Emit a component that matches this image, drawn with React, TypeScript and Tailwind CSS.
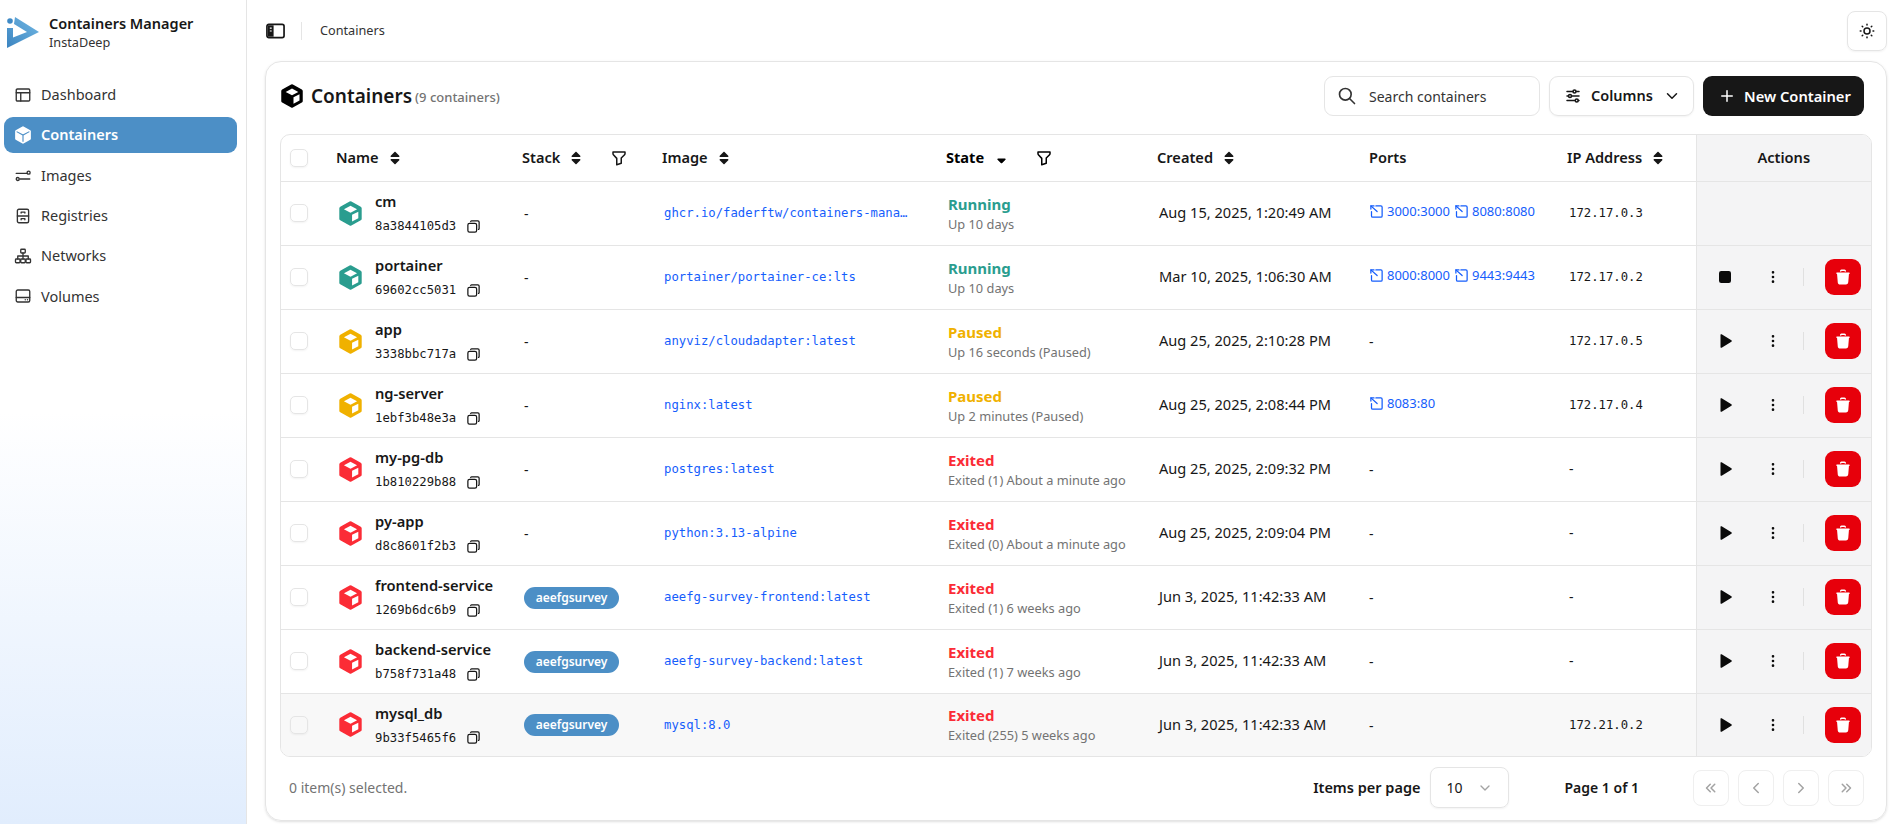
import {
  TbAdjustmentsHorizontal,
  TbChevronDown,
  TbChevronLeft,
  TbChevronRight,
  TbChevronsLeft,
  TbChevronsRight,
  TbCopy,
  TbDotsVertical,
  TbFilter,
  TbPlayerPlayFilled,
  TbPlayerStopFilled,
  TbPlus,
  TbSearch,
  TbSun,
  TbTrashFilled,
} from "react-icons/tb";
import { FaSort, FaSortDown } from "react-icons/fa";

type State = "Running" | "Paused" | "Exited";

interface Container {
  name: string;
  id: string;
  stack?: string;
  image: string;
  state: State;
  status: string;
  created: string;
  ports: string[];
  ip: string;
}

const containers: Container[] = [
  { name: "cm", id: "8a3844105d3", image: "ghcr.io/faderftw/containers-mana…", state: "Running", status: "Up 10 days", created: "Aug 15, 2025, 1:20:49 AM", ports: ["3000:3000", "8080:8080"], ip: "172.17.0.3" },
  { name: "portainer", id: "69602cc5031", image: "portainer/portainer-ce:lts", state: "Running", status: "Up 10 days", created: "Mar 10, 2025, 1:06:30 AM", ports: ["8000:8000", "9443:9443"], ip: "172.17.0.2" },
  { name: "app", id: "3338bbc717a", image: "anyviz/cloudadapter:latest", state: "Paused", status: "Up 16 seconds (Paused)", created: "Aug 25, 2025, 2:10:28 PM", ports: [], ip: "172.17.0.5" },
  { name: "ng-server", id: "1ebf3b48e3a", image: "nginx:latest", state: "Paused", status: "Up 2 minutes (Paused)", created: "Aug 25, 2025, 2:08:44 PM", ports: ["8083:80"], ip: "172.17.0.4" },
  { name: "my-pg-db", id: "1b810229b88", image: "postgres:latest", state: "Exited", status: "Exited (1) About a minute ago", created: "Aug 25, 2025, 2:09:32 PM", ports: [], ip: "-" },
  { name: "py-app", id: "d8c8601f2b3", image: "python:3.13-alpine", state: "Exited", status: "Exited (0) About a minute ago", created: "Aug 25, 2025, 2:09:04 PM", ports: [], ip: "-" },
  { name: "frontend-service", id: "1269b6dc6b9", stack: "aeefgsurvey", image: "aeefg-survey-frontend:latest", state: "Exited", status: "Exited (1) 6 weeks ago", created: "Jun 3, 2025, 11:42:33 AM", ports: [], ip: "-" },
  { name: "backend-service", id: "b758f731a48", stack: "aeefgsurvey", image: "aeefg-survey-backend:latest", state: "Exited", status: "Exited (1) 7 weeks ago", created: "Jun 3, 2025, 11:42:33 AM", ports: [], ip: "-" },
  { name: "mysql_db", id: "9b33f5465f6", stack: "aeefgsurvey", image: "mysql:8.0", state: "Exited", status: "Exited (255) 5 weeks ago", created: "Jun 3, 2025, 11:42:33 AM", ports: [], ip: "172.21.0.2" },
];

const stateText: Record<State, string> = {
  Running: "text-[#2a9d8f]",
  Paused: "text-[#f0b100]",
  Exited: "text-[#fb2c36]",
};

// --- Icons drawn by hand ---
const Logo = () => (
  <svg width="34" height="33" viewBox="0 0 34 33" className="shrink-0">
    <defs>
      <linearGradient id="logo" x1="0" y1="1" x2="1" y2="0">
        <stop offset="0" stopColor="#3b84c0" />
        <stop offset="1" stopColor="#72b8e4" />
      </linearGradient>
    </defs>
    <path d="M9 1 33 16 1 32V12h6v9.500L21 16 8 8Z" fill="url(#logo)" />
    <circle cx="4" cy="5" r="2.800" fill="#3f8ac6" />
  </svg>
);

const Cube = ({ className }: { className: string }) => (
  <svg viewBox="0 0 24 24" className={className}>
    <path d="M12 2 21 7v10L12 22 3 17V7Z" fill="currentColor" stroke="currentColor" strokeWidth="3.500" strokeLinejoin="round" />
    <path d="M12 4.600 18.300 8 12 11.200 5.700 8Z" fill="#fff" />
    <path d="M13.500 13.200 19.500 10.200v6.300l-6 3.200Z" fill="#fff" />
  </svg>
);

const ActiveCube = () => (
  <svg viewBox="0 0 24 24" className="h-[18px] w-[18px] shrink-0">
    <path d="M12 2 21 7v10L12 22 3 17V7Z" fill="#fff" stroke="#fff" strokeWidth="3" strokeLinejoin="round" />
    <path d="M3.500 7.500 12 12l8.500-4.500M12 12v9" fill="none" stroke="#4c8fc6" strokeWidth="1.500" />
  </svg>
);

const PortIcon = () => (
  <svg viewBox="0 0 24 24" fill="none" stroke="currentColor" strokeWidth="2" strokeLinecap="round" strokeLinejoin="round" className="h-[15px] w-[15px] shrink-0">
    <path d="M11 3h8a2 2 0 0 1 2 2v14a2 2 0 0 1-2 2H6a2 2 0 0 1-2-2v-7" />
    <path d="M13 12 3 3" />
    <path d="M3 8V3h5" />
  </svg>
);

const navIcon = "h-[18px] w-[18px] shrink-0";
const stroke = { fill: "none", stroke: "currentColor", strokeWidth: 1.8, strokeLinecap: "round" as const, strokeLinejoin: "round" as const };

const DashboardIcon = () => (
  <svg viewBox="0 0 24 24" className={navIcon} {...stroke}>
    <rect x="3" y="4" width="18" height="16" rx="1.500" />
    <path d="M3 9h18M9 9v11" />
  </svg>
);
const ImagesIcon = () => (
  <svg viewBox="0 0 24 24" className={navIcon} {...stroke}>
    <path d="M3 8.500h14.500M21 16H8" />
    <circle cx="19.500" cy="7.500" r="2" />
    <circle cx="5" cy="16" r="2" />
  </svg>
);
const RegistriesIcon = () => (
  <svg viewBox="0 0 24 24" className={navIcon} {...stroke}>
    <rect x="4.500" y="3" width="15" height="18" rx="2" />
    <path d="M4.500 12h15M9.500 8V6.800h5V8M9.500 17v-1.500h5V17" />
  </svg>
);
const NetworksIcon = () => (
  <svg viewBox="0 0 24 24" className={navIcon} {...stroke}>
    <rect x="9" y="3" width="6" height="5" rx="1" />
    <rect x="2" y="16" width="6" height="5" rx="1" />
    <rect x="9" y="16" width="6" height="5" rx="1" />
    <rect x="16" y="16" width="6" height="5" rx="1" />
    <path d="M12 8v8M5 16v-4h14v4" />
  </svg>
);
const VolumesIcon = () => (
  <svg viewBox="0 0 24 24" className={navIcon} {...stroke}>
    <rect x="3" y="4" width="18" height="16" rx="2" />
    <path d="M3 14h18M15 17h.01M18 17h.01" />
  </svg>
);
const SidebarIcon = () => (
  <svg viewBox="0 0 20 16" className="h-[16px] w-[19px]">
    <rect x="1" y="1" width="18" height="14" rx="2" fill="none" stroke="currentColor" strokeWidth="1.800" />
    <path d="M2 2h6v12H2Z" fill="currentColor" />
    <path d="M4 5h2M4 8h2" stroke="#fff" strokeWidth="1.200" />
  </svg>
);

const checkbox = "block h-[18px] w-[18px] rounded-[5px] border border-[#e5e5e5] shadow-xs";

const nav = [
  { label: "Dashboard", icon: <DashboardIcon /> },
  { label: "Containers", icon: <ActiveCube />, active: true },
  { label: "Images", icon: <ImagesIcon /> },
  { label: "Registries", icon: <RegistriesIcon /> },
  { label: "Networks", icon: <NetworksIcon /> },
  { label: "Volumes", icon: <VolumesIcon /> },
];

const Sidebar = () => (
  <aside className="flex w-[247px] shrink-0 flex-col border-r border-[#e5e5e5] bg-gradient-to-b from-white from-50% to-[#e1edfd] pl-1 pr-[9px]">
    <div className="flex h-[60px] items-center gap-[9px] pl-[2px] pt-[4px]">
      <Logo />
      <div className="flex flex-col">
        <span className="text-[14.500px] leading-[20px] font-semibold text-[#171717]">Containers Manager</span>
        <span className="text-[12.700px] leading-[18px] text-[#333]">InstaDeep</span>
      </div>
    </div>
    <nav className="mt-[17px] flex flex-col gap-[4.300px]">
      {nav.map((item) => (
        <div
          key={item.label}
          className={
            item.active
              ? "flex h-[36px] items-center gap-[9px] rounded-[9px] bg-[#4c8fc6] pl-[10px] text-[14.500px] font-semibold text-white"
              : "flex h-[36px] items-center gap-[9px] pl-[10px] text-[14.500px] text-[#333]"
          }
        >
          {item.icon}
          {item.label}
        </div>
      ))}
    </nav>
  </aside>
);

const Th = ({ label, sort, filter, bold }: { label: string; sort?: boolean; filter?: boolean; bold?: boolean }) => (
  <th className="border-b border-[#e5e5e5] px-2.5 text-left">
    <div className={bold ? "flex items-center text-[14.600px] font-bold text-black" : "flex items-center text-[14.600px] font-semibold text-[#171717]"}>
      {label}
      {sort && (bold ? <FaSortDown className="ml-[10px] h-[15px] w-[15px]" /> : <FaSort className="ml-[8px] h-[16px] w-[16px]" />)}
      {filter && <TbFilter className="ml-[26px] h-[18px] w-[18px]" />}
    </div>
  </th>
);

const Row = ({ row, last }: { row: Container; last: boolean }) => (
  <tr className={last ? "h-[63px] bg-[#f8f8f8]" : "h-[64px] border-b border-[#e5e5e5]"}>
    <td className="pl-[9px]">
      <span className={checkbox} />
    </td>
    <td className="pl-3">
      <div className="flex items-center gap-[12px]">
        <Cube className={`h-[25px] w-[25px] shrink-0 ${stateText[row.state]}`} />
        <div className="flex flex-col">
          <span className="text-[14.700px] leading-[20px] font-semibold text-[#171717]">{row.name}</span>
          <span className="mt-[6px] flex items-center gap-[10px] font-['DejaVu_Sans_Mono',monospace] text-[12.250px] leading-[18px] text-[#171717]">
            {row.id}
            <TbCopy className="h-[15px] w-[15px] -scale-x-100" />
          </span>
        </div>
      </div>
    </td>
    <td className="pl-3 text-[14px] text-[#171717]">
      {row.stack ? (
        <span className="inline-flex h-[22px] w-[95px] items-center justify-center rounded-full bg-[#4c8fc6] text-[12px] font-semibold text-white">{row.stack}</span>
      ) : (
        "-"
      )}
    </td>
    <td className="pl-3">
      <span className="block whitespace-nowrap font-['DejaVu_Sans_Mono',monospace] text-[12.250px] text-[#155dfc]">{row.image}</span>
    </td>
    <td className="pl-3">
      <div className="flex flex-col">
        <span className={`-mt-[1px] text-[15px] leading-[20px] font-bold ${stateText[row.state]}`}>{row.state}</span>
        <span className="mt-[2px] text-[12.800px] leading-[16px] text-[#737373]">{row.status}</span>
      </div>
    </td>
    <td className="pl-3 text-[14.600px] text-[#171717]">{row.created}</td>
    <td className="pl-2.5">
      {row.ports.length ? (
        <div className="-mt-[3px] flex items-center gap-[4px] text-[13px] text-[#155dfc]">
          {row.ports.map((port) => (
            <span key={port} className="flex items-center gap-[3px]">
              <PortIcon />
              {port}
            </span>
          ))}
        </div>
      ) : (
        <span className="text-[14px] text-[#171717]">-</span>
      )}
    </td>
    <td className="pl-3 font-['DejaVu_Sans_Mono',monospace] text-[12.250px] text-[#171717]">
      {row.ip === "-" ? <span className="font-['Noto_Sans',sans-serif] text-[14px]">-</span> : row.ip}
    </td>
    <td className="border-l border-[#e5e5e5] bg-[#f4f4f5] pl-[10px]">
      {row.name !== "cm" && (
        <div className="flex items-center">
          <span className="flex h-9 w-9 items-center justify-center text-[#0a0a0a]">
            {row.state === "Running" ? <TbPlayerStopFilled className="h-[18px] w-[18px]" /> : <TbPlayerPlayFilled className="h-[18px] w-[18px]" />}
          </span>
          <span className="ml-3 flex h-9 w-9 items-center justify-center text-[#0a0a0a]">
            <TbDotsVertical className="h-[16px] w-[16px]" />
          </span>
          <span className="ml-3 h-[18px] w-px bg-[#e0e0e0]" />
          <span className="ml-[21px] flex h-9 w-9 items-center justify-center rounded-[9px] bg-[#e7000b] text-white">
            <TbTrashFilled className="h-[18px] w-[18px]" />
          </span>
        </div>
      )}
    </td>
  </tr>
);

const pagerButton = "flex h-[36px] w-[36px] items-center justify-center rounded-[8px] border border-[#efefef] text-[#a3a3a3]";

export default function App() {
  return (
    <div className="flex h-screen w-full overflow-hidden bg-white font-['Noto_Sans',sans-serif] text-[#171717]">
      <Sidebar />
      <main className="flex min-w-0 flex-1 flex-col">
        <header className="flex h-[61px] shrink-0 items-center pl-[19px] pr-[17px]">
          <SidebarIcon />
          <span className="ml-[16px] h-[18px] w-px bg-[#e5e5e5]" />
          <span className="ml-[18px] text-[12.700px] text-[#333]">Containers</span>
          <button className="ml-auto flex h-[40px] w-[40px] items-center justify-center rounded-[8px] border border-[#e5e5e5] shadow-xs">
            <TbSun className="h-[18px] w-[18px]" />
          </button>
        </header>

        <section className="ml-[18px] mr-[17px] flex h-[760px] shrink-0 flex-col rounded-[16px] border border-[#e5e5e5] px-[14px] shadow-sm">
          <div className="flex h-[72px] shrink-0 items-center pb-[4px]">
            <Cube className="h-[24px] w-[24px] text-black" />
            <h1 className="ml-[7px] text-[19px] font-semibold text-[#171717]">Containers</h1>
            <span className="ml-[3px] mt-[3px] text-[13px] font-medium text-[#737373]">(9 containers)</span>
            <div className="ml-auto flex h-[40px] w-[216px] items-center gap-[12px] rounded-[9px] border border-[#e5e5e5] pl-[12px] text-[14px] text-[#333]">
              <TbSearch className="h-[20px] w-[20px]" />
              Search containers
            </div>
            <div className="ml-[9px] flex h-[40px] w-[145px] items-center rounded-[9px] border border-[#e5e5e5] pl-[14px] text-[14.500px] font-semibold shadow-xs">
              <TbAdjustmentsHorizontal className="h-[18px] w-[18px]" />
              <span className="ml-[9px]">Columns</span>
              <TbChevronDown className="ml-[10px] h-[18px] w-[18px]" />
            </div>
            <div className="ml-[9px] mr-[8px] flex h-[40px] w-[161px] items-center rounded-[9px] bg-[#171717] pl-[15px] text-[14.700px] font-semibold text-white">
              <TbPlus className="h-[18px] w-[18px]" />
              <span className="ml-[8px]">New Container</span>
            </div>
          </div>

          <div className="overflow-hidden rounded-[10px] border border-[#e5e5e5]">
            <table className="w-full table-fixed">
              <colgroup>
                <col className="w-[45px]" />
                <col className="w-[186px]" />
                <col className="w-[140px]" />
                <col className="w-[284px]" />
                <col className="w-[211px]" />
                <col className="w-[212px]" />
                <col className="w-[198px]" />
                <col className="w-[139px]" />
                <col className="w-[175px]" />
              </colgroup>
              <thead>
                <tr className="h-[46px]">
                  <th className="border-b border-[#e5e5e5] pl-[9px]">
                    <span className={checkbox} />
                  </th>
                  <Th label="Name" sort />
                  <Th label="Stack" sort filter />
                  <Th label="Image" sort />
                  <Th label="State" sort filter bold />
                  <Th label="Created" sort />
                  <Th label="Ports" />
                  <Th label="IP Address" sort />
                  <th className="border-b border-l border-[#e5e5e5] bg-[#f4f4f5] text-center text-[14.600px] font-semibold text-[#171717]">Actions</th>
                </tr>
              </thead>
              <tbody>
                {containers.map((row, index) => (
                  <Row key={row.id} row={row} last={index === containers.length - 1} />
                ))}
              </tbody>
            </table>
          </div>

          <div className="flex flex-1 items-center pb-[2px]">
            <span className="pl-[9px] text-[14px] text-[#737373]">0 item(s) selected.</span>
            <span className="ml-auto text-[14.500px] font-semibold">Items per page</span>
            <div className="ml-[10px] flex h-[41px] w-[79px] items-center justify-between rounded-[8px] border border-[#e5e5e5] px-[15px] text-[14px] shadow-xs">
              10
              <TbChevronDown className="h-[16px] w-[16px] text-[#a3a3a3]" />
            </div>
            <span className="ml-[55px] text-[14px] font-semibold">Page 1 of 1</span>
            <div className="ml-[54px] mr-[8px] flex items-center gap-[9px]">
              <span className={pagerButton}><TbChevronsLeft className="h-[18px] w-[18px]" /></span>
              <span className={pagerButton}><TbChevronLeft className="h-[18px] w-[18px]" /></span>
              <span className={pagerButton}><TbChevronRight className="h-[18px] w-[18px]" /></span>
              <span className={pagerButton}><TbChevronsRight className="h-[18px] w-[18px]" /></span>
            </div>
          </div>
        </section>
      </main>
    </div>
  );
}
